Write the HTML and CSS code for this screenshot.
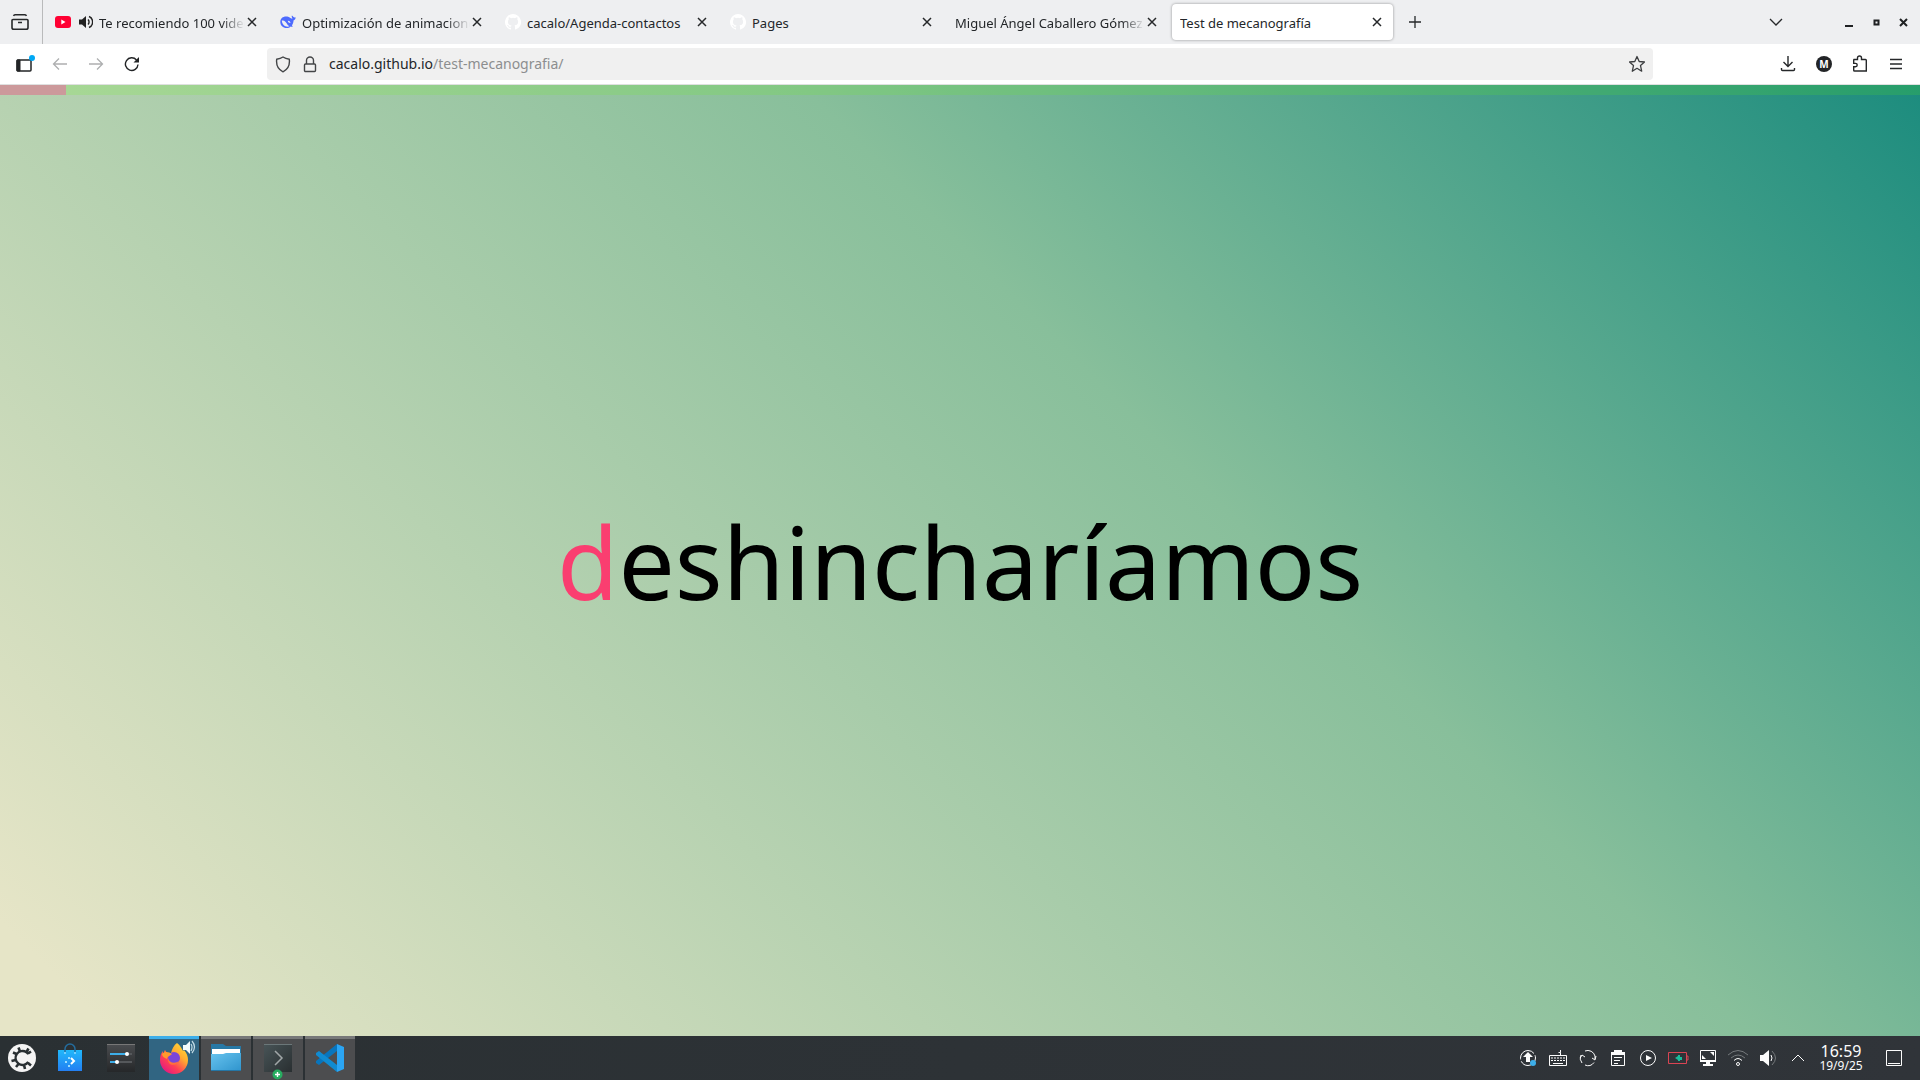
FILE: index.html
```html
<!DOCTYPE html>
<html lang="es">
<head>
<meta charset="utf-8">
<title>Test de mecanografía</title>
<link rel="stylesheet" href="styles.css">
</head>
<body>
<div class="desktop">
  <header class="tabbar">
    <button class="icon-btn recent" aria-label="Vista de Firefox"><svg width="18" height="18" viewBox="0 0 18 18" fill="none" stroke="#26282a" stroke-width="1.6"><path d="M4 1.8h10a2 2 0 0 1 1.500 1M2 6.500h14a1 1 0 0 1 1 1v7a1.800 1.800 0 0 1-1.800 1.800H2.800A1.800 1.800 0 0 1 1 14.500v-7a1 1 0 0 1 1-1zM7 9.500h4M2.500 2.800A2 2 0 0 1 4 1.800"/></svg></button>
    <nav class="tabs" aria-label="Pestañas">
      <div class="tab">
        <svg class="fav" width="16" height="16" viewBox="0 0 16 16"><rect y="2" width="16" height="12" rx="3" fill="#ff0033"/><path d="M6.300 5.500v5l4.200-2.500z" fill="#fff"/></svg>
        <svg class="sound" width="14" height="14" viewBox="0 0 14 14"><path d="M0 4.500h3L7 1v12L3 9.500H0z" fill="#222"/><path d="M9 4.500a3.500 3.500 0 0 1 0 5M10 1.500a6 6 0 0 1 0 11" fill="none" stroke="#222" stroke-width="1.400"/></svg>
        <a class="label fade" href="#">Te recomiendo 100 videos</a><button class="close" aria-label="Cerrar"><svg width="10" height="10" viewBox="0 0 10 10"><path d="M1 1l8 8M9 1L1 9"/></svg></button>
      </div>
      <div class="tab">
        <svg class="fav" width="16" height="16" viewBox="0 0 16 16"><path d="M15.700 3.200c-1 .5-1.700.3-2.500-.4-.4-.5-.7-.9-1.300-1.300-.4 1-.2 2.200.7 3-.7.100-1.400 0-2.100-.5C8.600 2.900 7.700 2.500 6 2.500 2.700 2.500.3 4.700.3 8c0 3.500 2.800 6 6.200 6 1.800 0 3.100-.6 4.200-1.600.7.300 1.500.4 2.100.1-.5-.3-.7-.7-.8-1.300 1.200-1.700 1.500-3.100 1.500-4.700 1.300-.5 2.200-1.700 2.200-3.300z" fill="#4d6bfe"/><path d="M1.800 6.500c2.500-.5 4 1.200 5 3 .8 1.300 1.500 2.200 2.700 2.800-3.500 1.500-7.500-1.500-7.700-5.800zM7.800 6.800c1.300-.2 2.400.7 2.700 2.200-1.400.1-2.500-.7-2.700-2.200z" fill="#eeeff1"/></svg>
        <a class="label fade" href="#">Optimización de animaciones</a><button class="close" aria-label="Cerrar"><svg width="10" height="10" viewBox="0 0 10 10"><path d="M1 1l8 8M9 1L1 9"/></svg></button>
      </div>
      <div class="tab">
        <svg class="fav" width="16" height="16" viewBox="0 0 16 16"><path d="M8 0a8 8 0 0 0-2.530 15.590c.4.070.550-.17.550-.38v-1.490c-2.010.37-2.530-.49-2.690-.94-.09-.23-.48-.94-.82-1.130-.28-.15-.68-.52-.01-.53.630-.01 1.080.58 1.230.82.720 1.210 1.870.87 2.330.66.070-.52.280-.87.510-1.070-1.780-.2-3.640-.89-3.640-3.950 0-.87.310-1.590.82-2.150-.08-.2-.36-1.020.08-2.120 0 0 .67-.21 2.200.82a7.600 7.600 0 0 1 4 0c1.530-1.040 2.200-.82 2.200-.82.440 1.100.160 1.920.08 2.120.51.560.82 1.270.82 2.150 0 3.070-1.870 3.750-3.650 3.950.290.250.540.730.540 1.480v2.200c0 .210.150.460.550.380A8 8 0 0 0 8 0z" fill="#fff"/></svg>
        <a class="label" href="#">cacalo/Agenda-contactos</a><button class="close" aria-label="Cerrar"><svg width="10" height="10" viewBox="0 0 10 10"><path d="M1 1l8 8M9 1L1 9"/></svg></button>
      </div>
      <div class="tab">
        <svg class="fav" width="16" height="16" viewBox="0 0 16 16"><path d="M8 0a8 8 0 0 0-2.530 15.590c.4.070.550-.17.550-.38v-1.490c-2.010.37-2.530-.49-2.690-.94-.09-.23-.48-.94-.82-1.130-.28-.15-.68-.52-.01-.53.630-.01 1.080.58 1.230.82.720 1.210 1.870.87 2.330.66.070-.52.280-.87.510-1.070-1.780-.2-3.640-.89-3.640-3.950 0-.87.310-1.590.82-2.150-.08-.2-.36-1.020.08-2.120 0 0 .67-.21 2.200.82a7.600 7.600 0 0 1 4 0c1.530-1.040 2.200-.82 2.200-.82.440 1.100.160 1.920.08 2.120.51.560.82 1.270.82 2.150 0 3.070-1.870 3.750-3.650 3.950.290.250.540.730.540 1.480v2.200c0 .210.150.460.550.380A8 8 0 0 0 8 0z" fill="#fff"/></svg>
        <a class="label" href="#">Pages</a><button class="close" aria-label="Cerrar"><svg width="10" height="10" viewBox="0 0 10 10"><path d="M1 1l8 8M9 1L1 9"/></svg></button>
      </div>
      <div class="tab">
        <a class="label fade" href="#">Miguel Ángel Caballero Gómez</a><button class="close" aria-label="Cerrar"><svg width="10" height="10" viewBox="0 0 10 10"><path d="M1 1l8 8M9 1L1 9"/></svg></button>
      </div>
      <div class="tab active">
        <a class="label" href="#" aria-current="page">Test de mecanografía</a><button class="close" aria-label="Cerrar"><svg width="10" height="10" viewBox="0 0 10 10"><path d="M1 1l8 8M9 1L1 9"/></svg></button>
      </div>
    </nav>
    <button class="icon-btn newtab" aria-label="Nueva pestaña"><svg width="14" height="14" viewBox="0 0 14 14" stroke="#26282a" stroke-width="1.300"><path d="M7 1v12M1 7h12"/></svg></button>
    <div class="window-tools">
      <button class="icon-btn alltabs" aria-label="Listar pestañas"><svg width="14" height="14" viewBox="0 0 14 14" fill="none" stroke="#26282a" stroke-width="1.300"><path d="M1 4l6 6 6-6"/></svg></button>
      <button class="icon-btn" aria-label="Minimizar"><svg width="9" height="9" viewBox="0 0 9 9"><path d="M0 7h8v2H0z" fill="#1f2123"/></svg></button>
      <button class="icon-btn" aria-label="Maximizar"><svg width="9" height="9" viewBox="0 0 9 9"><path d="M2.500 2.500h4v4h-4z" fill="none" stroke="#1f2123" stroke-width="2"/></svg></button>
      <button class="icon-btn" aria-label="Cerrar ventana"><svg width="9" height="9" viewBox="0 0 9 9"><path d="M1 1l7 7M8 1L1 8" stroke="#1f2123" stroke-width="2"/></svg></button>
    </div>
  </header>

  <div class="toolbar">
    <div class="nav-buttons">
      <button class="icon-btn" aria-label="Barra lateral"><svg class="sidebar-icon" width="16" height="18" viewBox="0 0 16 18"><rect x="1" y="5" width="14" height="11" rx="1" fill="#fff" stroke="#222426" stroke-width="1.500"/><path d="M1 5h3v11H1z" fill="#222426" stroke="#222426"/><circle cx="16" cy="3" r="3" fill="#00a8f5"/></svg></button>
      <button class="icon-btn" aria-label="Atrás" disabled><svg width="16" height="16" viewBox="0 0 16 16" fill="none" stroke="#aeafb0" stroke-width="1.300"><path d="M15 8H1.500M7 2.500L1.500 8 7 13.500"/></svg></button>
      <button class="icon-btn" aria-label="Adelante" disabled><svg width="16" height="16" viewBox="0 0 16 16" fill="none" stroke="#aeafb0" stroke-width="1.300"><path d="M1 8h13.500M9 2.500L14.500 8 9 13.500"/></svg></button>
      <button class="icon-btn" aria-label="Recargar"><svg width="16" height="16" viewBox="0 0 16 16"><path d="M14 8.500A6.300 6.300 0 1 1 12.500 4" fill="none" stroke="#222426" stroke-width="1.400"/><path d="M15 1v5.500H9.500z" fill="#222426"/></svg></button>
    </div>
    <div class="urlbar">
      <svg width="16" height="17" viewBox="0 0 16 17" fill="none" stroke="#434547" stroke-width="1.400"><path d="M8 1c2 1.300 4 1.900 6.300 2.300C15 9 12.800 13.500 8 15.800 3.200 13.500 1 9 1.700 3.300 4 2.900 6 2.300 8 1z"/></svg>
      <svg width="14" height="17" viewBox="0 0 14 17" fill="none" stroke="#434547" stroke-width="1.400"><rect x="1.500" y="8" width="11" height="7.500" rx="1"/><path d="M3.500 8V4.500a3.500 3.500 0 0 1 7 0V8"/></svg>
      <a class="url" href="#">cacalo.github.io<span>/test-mecanografia/</span></a>
      <button class="icon-btn star" aria-label="Añadir a marcadores"><svg width="16" height="18" viewBox="1 0 16 18" fill="none" stroke="#3d3f41" stroke-width="1.300" stroke-linejoin="round"><path d="M9 1.500l2.200 5 5.300.5-4 3.600 1.200 5.600L9 13.300l-4.700 2.900 1.200-5.600-4-3.600 5.300-.5z"/></svg></button>
    </div>
    <div class="page-tools">
      <button class="icon-btn" aria-label="Descargas"><svg width="16" height="16" viewBox="0 0 16 16" fill="none" stroke="#26282a" stroke-width="1.400"><path d="M8 0v10M3.500 6L8 10.500 12.500 6M1.500 12v1.500a1 1 0 0 0 1 1h11a1 1 0 0 0 1-1V12"/></svg></button>
      <button class="icon-btn account" aria-label="Cuenta">M</button>
      <button class="icon-btn" aria-label="Extensiones"><svg width="16" height="18" viewBox="0 0 16 18" fill="none" stroke="#26282a" stroke-width="1.400"><path d="M2 4.500h3.500V3a2 2 0 0 1 4 0v1.500H13.500a.8.8 0 0 1 .8.800V16H2.500a.8.800 0 0 1-.8-.8v-3.400h1.800a1.700 1.700 0 0 0 0-3.400H1.700V5z"/></svg></button>
      <button class="icon-btn" aria-label="Menú"><svg width="16" height="12" viewBox="-2 0 16 12" stroke="#26282a" stroke-width="1.300"><path d="M0 1.500h12M0 6h12M0 10.500h12"/></svg></button>
    </div>
  </div>

  <main class="page">
    <div class="progress"><div class="progress-done"></div></div>
    <p class="word"><span class="current">d</span>eshincharíamos</p>
  </main>

  <footer class="taskbar">
    <div class="launchers">
      <button class="app" aria-label="Lanzador"><svg width="30" height="30" viewBox="0 0 30 30"><circle cx="15" cy="15" r="14" fill="#f4f4f4"/><circle cx="15.500" cy="15" r="7" fill="none" stroke="#293033" stroke-width="2.400" stroke-dasharray="35.600 8.400" transform="rotate(34 15.500 15)"/><path d="M13 8.500L11.500 4.500M19.500 9l2-3.500M9.500 11L6 9.500M8.500 17l-4 1M11.500 21l-2.500 3M17 22l1 4M21 20l3 2.500M21 10.500l3-2" stroke="#293033" stroke-width="2.600"/></svg></button>
      <button class="app" aria-label="Discover"><svg width="30" height="30" viewBox="0 0 30 30"><defs><linearGradient id="bag" x2="0" y2="1"><stop stop-color="#20b8fb"/><stop offset="1" stop-color="#237ff2"/></linearGradient></defs><path d="M1 7h24v21H1z" fill="url(#bag)"/><path d="M8 9V6a5 5 0 0 1 10 0v3" fill="none" stroke="#246c9d" stroke-width="1.500"/><circle cx="8" cy="10" r="1" fill="#91d8ff"/><circle cx="18" cy="10" r="1" fill="#91d8ff"/><path d="M14 15l3 3-3 3" fill="none" stroke="#fff" stroke-width="2"/><path d="M9 16h2v-2h2v2h-2M8 18h2v2H8zM11 22h2v2h-2z" fill="#9bdcff"/></svg></button>
      <button class="app" aria-label="Preferencias"><svg width="30" height="30" viewBox="0 0 30 30"><defs><linearGradient id="dark" x2="0" y2="1"><stop stop-color="#4b4d50"/><stop offset="1" stop-color="#252729"/></linearGradient></defs><path d="M1 1h28v28H1z" fill="url(#dark)"/><path d="M1 1h28v1H1z" fill="#777"/><path d="M4 11h22M4 19h22" stroke="#55585b" stroke-width="2"/><path d="M4 11h17M4 19h7" stroke="#3daee9" stroke-width="2"/><circle cx="21" cy="11" r="2" fill="#fff"/><circle cx="11" cy="19" r="2" fill="#fff"/></svg></button>
    </div>
    <div class="tasks">
      <button class="task focused" aria-label="Firefox"><svg width="50" height="42" viewBox="0 0 50 42"><defs><linearGradient id="fox" x1="1" x2="0.200" y2="1"><stop stop-color="#ffe83b"/><stop offset=".4" stop-color="#ffab30"/><stop offset=".7" stop-color="#ff4055"/><stop offset="1" stop-color="#e31586"/></linearGradient></defs><path d="M28 4c3 2 5 6 6 8l1-1c3 3 4 7 4 10a14 14 0 0 1-28 0c0-4 1-7 3-9v3c1-1 1-3 2-4l2 3h4c1-4 3-8 6-10z" fill="url(#fox)"/><circle cx="25" cy="19" r="6" fill="#7a46d8"/><path d="M13 15c3-3 7-2 10 0-2 2-5 2-5 5-3-1-5-3-5-5z" fill="#ff9a2c"/><path d="M19 19c1 5 7 6 11 3-3 6-12 5-11-3z" fill="#ff7139"/><path d="M34 6h3l4-4v13l-4-4h-3z" fill="#f4fafc"/><path d="M42 5q2 3 0 7M43 2q5 6 0 12" fill="none" stroke="#c4dce6" stroke-width="1.200"/></svg></button>
      <button class="task" aria-label="Dolphin"><svg width="50" height="42" viewBox="0 0 50 42"><defs><linearGradient id="fold" x2="1" y2="1"><stop stop-color="#67c3ee"/><stop offset="1" stop-color="#2f94cd"/></linearGradient></defs><path d="M10 5h12l3 2h15v10H10z" fill="#2778a5"/><path d="M11 10h28v6H11z" fill="#fff"/><path d="M10 15h12l3-1h15v18H10z" fill="url(#fold)"/><path d="M10 31h30v1H10z" fill="#2576a5"/></svg></button>
      <button class="task" aria-label="Konsole"><svg width="50" height="42" viewBox="0 0 50 42"><defs><linearGradient id="term" x2="1" y2="1"><stop stop-color="#485457"/><stop offset="1" stop-color="#292f31"/></linearGradient></defs><path d="M11 5h28v28H11z" fill="url(#term)"/><path d="M11 5h28v1H11z" fill="#6b7779"/><path d="M22 12l7 7-7 7" fill="none" stroke="#a1a7a8" stroke-width="1.500"/><circle cx="24.500" cy="35.500" r="5" fill="#27ae60"/><path d="M24.500 33v5M22 35.500h5" stroke="#fff" stroke-width="1.400"/></svg></button>
      <button class="task" aria-label="Visual Studio Code"><svg width="50" height="42" viewBox="0 0 50 42"><path d="M32 5v7L14 26l-3-2v-2z" fill="#0875bd"/><path d="M32 33v-7L14 12l-3 2v2z" fill="#108bd1"/><path d="M32 5l7 3v22l-7 3z" fill="#2ba5f3"/></svg></button>
    </div>
    <div class="tray">
      <svg viewBox="0 0 22 22"><circle cx="11" cy="11" r="7.500" stroke-dasharray="20 2"/><path class="solid" d="M11 5l5 5h-3v5H9v-5H6z"/><circle cx="16" cy="16" r="3" fill="#3daee9" stroke="none"/></svg>
      <svg viewBox="0 0 22 22"><path d="M2.500 8.500h17v10h-17zM13.500 8V5.500h-2M13.500 5.500V3" /><path d="M4 11h14M4 13.500h14" stroke-dasharray="2 1"/><path d="M6 16.500h10"/></svg>
      <svg viewBox="0 0 22 22"><path d="M5 16A7.500 7.500 0 0 1 4 8M8 4a7.500 7.500 0 0 1 10 5v3M17 15.500A7.500 7.500 0 0 1 8 18M3 11l2-3 3 2M15 11l3 2 1-4"/></svg>
      <svg viewBox="0 0 22 22"><path d="M4.500 5.500h13v13h-13z"/><path class="solid" d="M4 5h14v3H4zM7 3h8v3H7zM7 10h8v1H7zM7 13h6v1H7zM7 16h4v1H7z"/></svg>
      <svg viewBox="0 0 22 22"><circle cx="11" cy="11" r="7.500"/><path class="solid" d="M9 8l6 3-6 3z"/></svg>
      <svg viewBox="0 0 22 22"><path d="M1.500 5.500h18v11h-18zM20 9h1v4h-1" stroke="#da4453"/><path d="M8 11l3-2v-1h2v2h2v3h-2v1h-2v-1z" fill="#1abc9c" stroke="none"/></svg>
      <svg viewBox="0 0 22 22"><path d="M3.500 3.500h15v10h-15z"/><path class="solid" d="M3 13h16v2H3zM9 15h4v2H9zM6 17h10v2H6zM13 5h4v4zM5 8l4 4H5z"/></svg>
      <svg viewBox="0 0 22 22"><path d="M1 8q10-9 20 0M4 11q7-6 14 0" stroke="#75797c"/><path d="M7 13.500q4-4 8 0"/><circle cx="11" cy="17" r="1.500"/></svg>
      <svg viewBox="0 0 22 22"><path class="solid" d="M3 8h3l6-5v16l-6-5H3z"/><path d="M14 8q2 3 0 6"/><path d="M15 4q7 7 0 14" stroke="#75797c"/></svg>
      <svg viewBox="0 0 22 22"><path d="M5 14l6-6 6 6"/></svg>
    </div>
    <time class="clock" datetime="2025-09-19T16:59"><span class="hour">16:59</span><span class="date">19/9/25</span></time>
    <button class="icon-btn show" aria-label="Mostrar escritorio"><svg width="16" height="16" viewBox="0 0 16 16" fill="none" stroke="#fcfcfc"><path d="M.5.5h15v15H.5zM2 13.500h12"/></svg></button>
  </footer>
</div>
</body>
</html>
```
FILE: styles.css
```css
* { box-sizing: border-box; }
body { margin: 0; font-family: "Noto Sans", sans-serif; color: #232629; }
button { padding: 0; border: 0; background: none; font: inherit; color: inherit; }
a { color: inherit; text-decoration: none; }
svg { display: block; flex: none; }

.desktop { min-height: 100vh; display: flex; flex-direction: column; }
.icon-btn { display: flex; align-items: center; justify-content: center; flex: none; }

/* Tab strip */
.tabbar { display: flex; align-items: center; height: 44px; background: #eeeff1; }
.recent { width: 43px; height: 44px; padding-right: 2px; border-right: 1px solid #b9babb; }
.tabs { display: flex; height: 44px; padding: 4px 0; margin-left: 2px; }
.tab { display: flex; align-items: center; width: 221px; height: 36px; margin: 0 2px; padding: 0 9px 0 8px; border-radius: 4px; font-size: 13px; }
.active { background: #fff; box-shadow: 0 0 3px #0006; }
.fav { margin-right: 6px; }
.sound { margin: 0 6px 0 2px; }
.label { flex: 1; min-width: 0; overflow: hidden; white-space: nowrap; line-height: 20px; padding-top: 2px; }
.fade { mask-image: linear-gradient(90deg, #000 calc(100% - 24px), transparent); }
.close { flex: none; padding: 2px; }
.close svg { stroke: #26282a; stroke-width: 1.5; }
.newtab { width: 40px; height: 40px; }
.window-tools { display: flex; align-items: center; gap: 18px; margin-left: auto; padding-right: 12px; }
.alltabs { margin-right: 44px; }

/* Navigation bar */
.toolbar { display: flex; align-items: center; justify-content: space-between; height: 41px; border-bottom: 1px solid #dfe0e0; background: #fff; }
.nav-buttons { display: flex; align-items: center; gap: 20px; width: 267px; padding-left: 16px; }
.sidebar-icon { overflow: visible; }
.urlbar { display: flex; align-items: center; flex: 1; height: 32px; padding: 0 8px; gap: 12px; border-radius: 4px; background: #f0f0f0; }
.url { flex: 1; font-size: 14px; line-height: 20px; }
.url span { color: #8c8e8f; }
.page-tools { display: flex; align-items: center; justify-content: flex-end; gap: 20px; width: 267px; padding-right: 16px; }
.account { width: 16px; height: 16px; border-radius: 50%; background: #222426; color: #fff; font-size: 10px; font-weight: 700; }

/* Typing test */
.page { flex: 1; display: flex; flex-direction: column; background: linear-gradient(45deg, #e6e5c7 4%, #88bf9b 61%, #1c8c7e); }
.progress { height: 10px; background: #66ff0026; }
.progress-done { width: 66px; height: 10px; background: #cc999b; }
.word { flex: 1; display: flex; align-items: center; justify-content: center; margin: 0; padding-bottom: 10px; font-size: 100px; line-height: 140px; color: #000; }
.current { color: #fa3e70; }

/* Desktop panel */
.taskbar { display: flex; align-items: center; height: 44px; padding-right: 5px; background: linear-gradient(90deg, #2a3033, #303439); color: #fcfcfc; }
.launchers { display: flex; width: 149px; }
.app { display: flex; justify-content: center; width: 50px; padding-right: 6px; }
.tasks { display: flex; gap: 2px; }
.task { width: 50px; height: 44px; border-top: 3px solid #777879; background: #4c4d4f; }
.focused { border-color: #3daee9; background: #316582; }
.tray { display: flex; gap: 8px; margin-left: auto; }
.tray svg { width: 22px; height: 22px; fill: none; stroke: #fcfcfc; }
.tray .solid { fill: #fcfcfc; stroke: none; }
.clock { display: flex; flex-direction: column; align-items: center; width: 64px; }
.hour { font-size: 16px; line-height: 16px; }
.date { font-size: 12px; line-height: 14px; }
.show { width: 42px; }
```
